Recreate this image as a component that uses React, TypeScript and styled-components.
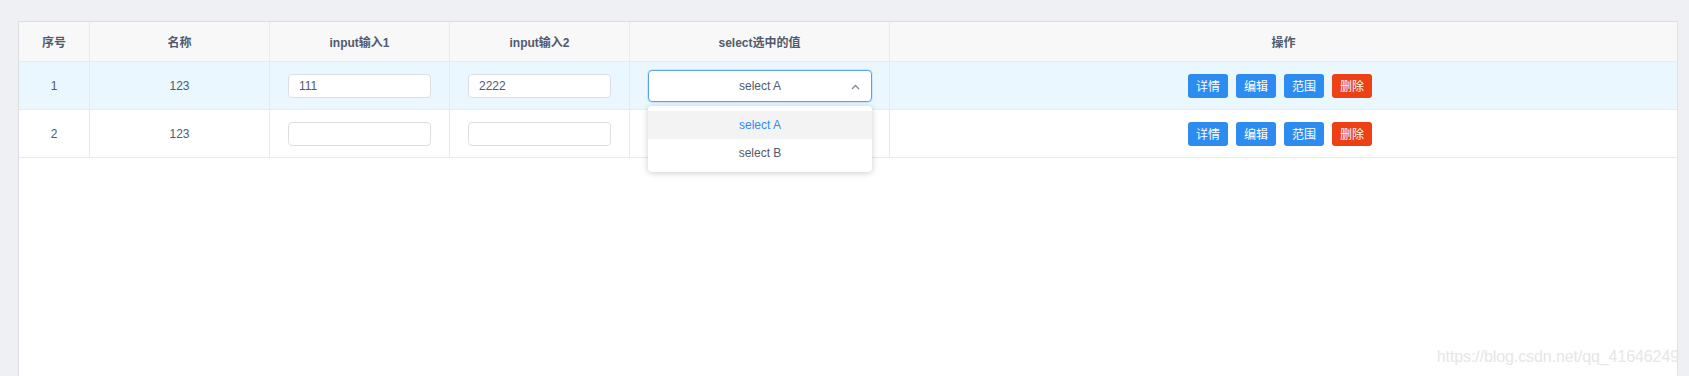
import React from 'react';
import styled, { createGlobalStyle } from 'styled-components';

const GlobalStyle = createGlobalStyle`
  html, body {
    margin: 0;
    padding: 0;
    background: #eef0f4;
    font-family: "Liberation Sans", "Noto Sans CJK SC", sans-serif;
    font-size: 12px;
    color: #515a6e;
    overflow: hidden;
  }
`;

const Page = styled.div`
  position: relative;
  height: 376px;
  padding: 21px 11px 0 18px;
  box-sizing: border-box;
  overflow: hidden;
`;

const TableBox = styled.div`
  background: #fff;
  border: 1px solid #dcdee2;
  border-right-color: #e1e3e7;
  border-bottom: none;
  height: 355px;
  box-sizing: border-box;
`;

const Row = styled.div<{ $bg: string; $height: number }>`
  display: grid;
  grid-template-columns: 71px 180px 180px 180px 260px 1fr;
  height: ${p => p.$height}px;
  background: ${p => p.$bg};
`;

const Cell = styled.div<{ $head?: boolean }>`
  position: relative;
  display: flex;
  align-items: center;
  justify-content: center;
  border-right: 1px solid #e8eaec;
  border-bottom: 1px solid #e8eaec;
  font-weight: ${p => (p.$head ? 700 : 400)};
  color: #515a6e;

  &:last-child {
    border-right: none;
  }
`;

const TextInput = styled.div`
  width: 143px;
  height: 24px;
  box-sizing: border-box;
  border: 1px solid #dcdee2;
  border-radius: 4px;
  background: #fff;
  padding: 0 10px;
  display: flex;
  align-items: center;
  color: #515a6e;
`;

const SelectBox = styled.div`
  position: relative;
  width: 224px;
  height: 32px;
  box-sizing: border-box;
  border: 1px solid #57a3f3;
  border-radius: 4px;
  box-shadow: 0 0 0 1px rgba(45, 140, 240, 0.15);
  background: #fff;
  display: flex;
  align-items: center;
  justify-content: center;
  margin-left: 1px;
`;

const Arrow = styled.svg`
  position: absolute;
  right: 11px;
  top: 13px;
`;

const Dropdown = styled.div`
  position: absolute;
  top: 44px;
  left: 18px;
  width: 224px;
  padding: 5px 0;
  background: #fff;
  border-radius: 4px;
  box-shadow: 0 1px 6px rgba(0, 0, 0, 0.2);
  z-index: 5;
`;

const Option = styled.div<{ $active?: boolean }>`
  height: 28px;
  display: flex;
  align-items: center;
  justify-content: center;
  color: ${p => (p.$active ? '#2d8cf0' : '#515a6e')};
  background: ${p => (p.$active ? '#f3f3f3' : '#fff')};
`;

const Actions = styled.div`
  display: flex;
  gap: 8px;
  margin-left: -7px;
`;

const Btn = styled.div<{ $danger?: boolean }>`
  width: 40px;
  height: 24px;
  box-sizing: border-box;
  border-radius: 3px;
  background: ${p => (p.$danger ? '#ed4014' : '#2d8cf0')};
  color: #fff;
  display: flex;
  align-items: center;
  justify-content: center;
  font-size: 12px;
`;

const Watermark = styled.div`
  position: absolute;
  right: 10px;
  bottom: 10px;
  font-family: "Liberation Sans", sans-serif;
  font-size: 16px;
  color: #e6e6e6;
  letter-spacing: -0.1px;
`;

const rows = [
  { id: 1, name: '123', a: '111', b: '2222', open: true },
  { id: 2, name: '123', a: '', b: '', open: false },
];

function App() {
  return (
    <>
      <GlobalStyle />
      <Page>
        <TableBox>
          <Row $bg="#f8f8f9" $height={40}>
            <Cell $head>序号</Cell>
            <Cell $head>名称</Cell>
            <Cell $head>input输入1</Cell>
            <Cell $head>input输入2</Cell>
            <Cell $head>select选中的值</Cell>
            <Cell $head>操作</Cell>
          </Row>
          {rows.map((r, i) => (
            <Row key={r.id} $bg={i === 0 ? '#ebf7ff' : '#fff'} $height={48}>
              <Cell>{r.id}</Cell>
              <Cell>{r.name}</Cell>
              <Cell>
                <TextInput>{r.a}</TextInput>
              </Cell>
              <Cell>
                <TextInput>{r.b}</TextInput>
              </Cell>
              <Cell>
                {r.open && (
                  <>
                    <SelectBox>
                      select A
                      <Arrow width="9" height="6" viewBox="0 0 9 6">
                        <polyline points="1,5 4.5,1.5 8,5" fill="none" stroke="#808695" strokeWidth="1.3" />
                      </Arrow>
                    </SelectBox>
                    <Dropdown>
                      <Option $active>select A</Option>
                      <Option>select B</Option>
                    </Dropdown>
                  </>
                )}
              </Cell>
              <Cell>
                <Actions>
                  <Btn>详情</Btn>
                  <Btn>编辑</Btn>
                  <Btn>范围</Btn>
                  <Btn $danger>删除</Btn>
                </Actions>
              </Cell>
            </Row>
          ))}
        </TableBox>
        <Watermark>https://blog.csdn.net/qq_41646249</Watermark>
      </Page>
    </>
  );
}

export default App;
